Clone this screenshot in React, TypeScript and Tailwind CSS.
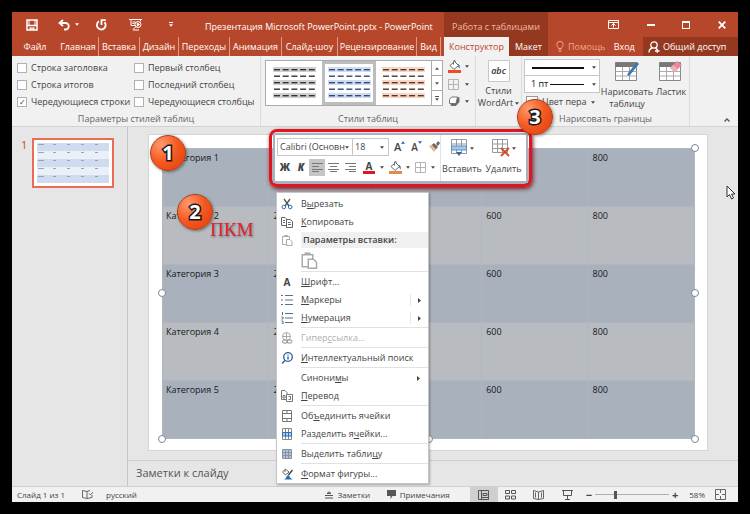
import React from 'react';
import clsx from 'clsx';

const tabs = [
  { label: 'Главная', width: 'w-[41px]' },
  { label: 'Вставка', width: 'w-[41px]' },
  { label: 'Дизайн', width: 'w-[39px]' },
  { label: 'Переходы', width: 'w-[51px]' },
  { label: 'Анимация', width: 'w-[52px]' },
  { label: 'Слайд-шоу', width: 'w-[56px]' },
  { label: 'Рецензирование', width: 'w-[79px]' },
  { label: 'Вид', width: 'w-[24px]' },
];

const rows = [1, 2, 3, 4, 5];

const Caret: React.FC<{ className?: string }> = ({ className }) => (
  <svg viewBox="0 0 4 3" className={clsx('h-[3px] w-1 shrink-0', className)} fill="currentColor" aria-hidden="true">
    <path d="M0 .3h4L2 2.7z" />
  </svg>
);

/* Title bar and tabs */

const QuickAccess = () => (
  <div className="flex w-[193px] shrink-0 items-center pl-[14px] text-white">
    <button aria-label="Сохранить" className="mr-[20px]">
      <svg viewBox="0 0 12 12" className="h-3 w-3" fill="none" stroke="currentColor" strokeWidth="1.5">
        <path d="M1 1h10v10H1zM1 6.5h10" />
        <path d="M3 1v5M9 1v5" strokeWidth="1" />
        <path d="M3.5 8.5h5V11h-2V9.5h-1V11h-2z" fill="currentColor" stroke="none" />
      </svg>
    </button>
    <button aria-label="Отменить" className="flex items-center gap-[5px]">
      <svg viewBox="0 0 12 12" className="h-3 w-3" fill="none" stroke="currentColor" strokeWidth="1.8">
        <path d="M5 1 1.5 4 5 7.2M2 4h5.5a3 3 0 0 1 0 6.5H6" />
      </svg>
      <Caret />
    </button>
    <button aria-label="Повторить" className="ml-[16px]">
      <svg viewBox="0 0 12 12" className="h-3 w-3" fill="none" stroke="currentColor" strokeWidth="1.8">
        <path d="M4 2.3a4.4 4.4 0 1 0 5.500.8M10.800 1.200H6.500V6" />
      </svg>
    </button>
    <button aria-label="Показ слайдов" className="ml-[22px]">
      <svg viewBox="0 0 14 13" className="h-[13px] w-[14px]" fill="none" stroke="currentColor" strokeWidth="1">
        <path d="M0 1.5h13M2 1.5v6h4M11.5 1.5v2M4 11.5l3-3M4 12h6" />
        <circle cx="9" cy="6.5" r="3" />
        <path d="M8.3 5v3l2.2-1.5z" fill="currentColor" />
        <path d="M3.5 4h3M3.5 5.5h2" />
      </svg>
    </button>
    <button aria-label="Настройка панели" className="ml-[26px] flex flex-col items-center gap-px">
      <span className="h-px w-1 bg-white" />
      <Caret />
    </button>
  </div>
);

const WindowControls = () => (
  <div className="ml-auto flex w-[130px] shrink-0 items-center justify-between pr-[12px] text-white">
    <button aria-label="Параметры ленты">
      <svg viewBox="0 0 11 9" className="h-[9px] w-[11px]" fill="none" stroke="currentColor">
        <path d="M.5.5h10v8H.5zM.5 2.5h10M5.5 7.5v-4M3.5 5.5l2-2 2 2" />
      </svg>
    </button>
    <button aria-label="Свернуть" className="h-[2px] w-2 bg-white" />
    <button aria-label="Развернуть" className="h-2 w-2 border border-t-2 border-white" />
    <button aria-label="Закрыть">
      <svg viewBox="0 0 8 8" className="h-2 w-2" stroke="currentColor" strokeWidth="1.8">
        <path d="m.7.7 6.6 6.6M7.3.7.7 7.3" />
      </svg>
    </button>
  </div>
);

const Header = () => (
  <header className="bg-[#b7472a] text-white">
    <div className="flex h-[25px]">
      <QuickAccess />
      <h1 className="flex w-[239px] shrink-0 items-center pt-1 text-[9px] whitespace-nowrap">
        Презентация Microsoft PowerPoint.pptx - PowerPoint
      </h1>
      <div className="flex w-[104px] shrink-0 items-center justify-center bg-[#953820] pt-1 text-[9px] text-[#f0b8a4]">
        Работа с таблицами
      </div>
      <WindowControls />
    </div>
    <nav className="flex h-[19px] items-stretch text-[9px] whitespace-nowrap">
      <button className="w-[46px] shrink-0">Файл</button>
      {tabs.map((tab) => (
        <button key={tab.label} className={clsx('shrink-0 border-r border-[#dc9c88]', tab.width)}>
          {tab.label}
        </button>
      ))}
      <button className="ml-[3px] w-[65px] shrink-0 bg-[#f1f1f1] text-[#c0452a]">Конструктор</button>
      <button className="w-[39px] shrink-0 bg-[#953820]">Макет</button>
      <button className="ml-[8px] flex items-center gap-1 text-[#efa68f]">
        <svg viewBox="0 0 8 11" className="h-[11px] w-2" fill="none" stroke="currentColor">
          <path d="M2.5 7.5C2.5 6 .8 5.500.8 3.600a3.200 3.200 0 0 1 6.400 0C7.200 5.500 5.500 6 5.500 7.500zM2.500 9h3M3 10.500h2" />
        </svg>
        Помощь
      </button>
      <button className="mx-auto">Вход</button>
      <button className="flex w-[95px] shrink-0 items-center gap-[3px] bg-[#953820] pl-[5px]">
        <svg viewBox="0 0 12 12" className="h-3 w-3" fill="none" stroke="currentColor" strokeWidth="1.300">
          <circle cx="6" cy="4" r="3.200" />
          <path d="M1 11.500c0-2.500 1.500-4 3.500-4.500M7.500 7l1.500 1.500M7 10h4.500M9.300 7.800v4" />
        </svg>
        Общий доступ
      </button>
    </nav>
  </header>
);

/* Ribbon */

const StyleOption: React.FC<{ label: string; checked?: boolean }> = ({ label, checked }) => (
  <label className="flex h-[17px] items-center gap-[4px] whitespace-nowrap">
    <input
      type="checkbox"
      defaultChecked={checked}
      className="grid h-[10px] w-[10px] shrink-0 appearance-none place-items-center border border-[#b0b0b0] bg-white text-[8px] leading-none checked:before:content-['✓']"
    />
    {label}
  </label>
);

const RibbonGroup: React.FC<{ title?: string; className?: string; children: React.ReactNode }> = ({
  title,
  className,
  children,
}) => (
  <section className={clsx('flex shrink-0 flex-col border-r border-[#dcdcdc]', className)}>
    <div className="flex h-[57px]">{children}</div>
    <div className="text-center text-[9px] leading-[14px] text-[#666]">{title}</div>
  </section>
);

const StyleThumb: React.FC<{ color: string; band: string; selected?: boolean }> = ({ color, band, selected }) => (
  <button
    aria-label="Стиль таблицы"
    className={clsx('flex items-center justify-center bg-white', selected && 'border-[3px] border-[#bdbdbd]')}
  >
    <svg viewBox="0 0 43 32" className="h-8 w-[43px]">
      {[0, 1, 2, 3, 4].map((r) => (
        <g key={r}>
          {r % 2 === 0 && <rect x="0" y={r * 6.5} width="43" height="5" fill={band} />}
          {[0, 1, 2, 3, 4].map((c) => (
            <rect key={c} x={c * 8.7 + 1} y={r * 6.5 + 2} width="6" height="1.4" fill={color} />
          ))}
        </g>
      ))}
    </svg>
  </button>
);

const BucketIcon: React.FC<{ bar: string }> = ({ bar }) => (
  <svg viewBox="0 0 13 13" className="h-[13px] w-[13px]" fill="none" stroke="#666">
    <path d="m2 5.500 4.500-4 4 4-4.500 4z" fill="#fff" />
    <path d="M5.500 4.500V1.500a1 1 0 0 1 2 0" />
    <path d="M10 4c1.500.5 2 2 1.700 4.500C10.500 8 10 6 10 4z" fill="#2b6cb0" stroke="none" />
    <path d="M0 10h13v3H0z" fill={bar} stroke="none" />
  </svg>
);

const GridIcon = () => (
  <svg viewBox="0 0 11 11" className="h-[11px] w-[11px]" fill="none" stroke="#b4b4b4">
    <path d="M.5.5h10v10H.5zM5.500.5v10M.5 5.500h10" />
  </svg>
);

const TableIcon: React.FC<{ className?: string; children?: React.ReactNode }> = ({ className, children }) => (
  <svg viewBox="0 0 24 22" className={clsx('h-[22px] w-6', className)} fill="none">
    <path d="M.5 2.500h21v18H.5z" fill="#fff" stroke="#888" />
    <path d="M.5 2.500h21V7H.5z" fill="#777" />
    <path d="M.5 11.500h21M.5 16h21M7.500 7v13M14.500 7v13" stroke="#aaa" />
    {children}
  </svg>
);

const Ribbon = () => (
  <div className="flex h-[71px] border-b border-[#d2d2d2] bg-[#f1f1f1] text-[9px] text-[#444]">
    <RibbonGroup title="Параметры стилей таблиц" className="w-[249px]">
      <div className="flex w-[117px] flex-col pt-[3px] pl-[5px]">
        <StyleOption label="Строка заголовка" />
        <StyleOption label="Строка итогов" />
        <StyleOption label="Чередующиеся строки" checked />
      </div>
      <div className="flex flex-col pt-[3px] pl-[5px]">
        <StyleOption label="Первый столбец" />
        <StyleOption label="Последний столбец" />
        <StyleOption label="Чередующиеся столбцы" />
      </div>
    </RibbonGroup>

    <RibbonGroup title="Стили таблиц" className="w-[215px]">
      <div className="mt-1 ml-1 grid h-[46px] w-[178px] grid-cols-[56px_54px_1fr_11px] border border-[#ababab] bg-white">
        <StyleThumb color="#333" band="#cfcfcf" />
        <StyleThumb color="#2f4a80" band="#cfdcf0" selected />
        <StyleThumb color="#5a3526" band="#f8d5c4" />
        <div className="flex flex-col divide-y divide-[#ababab] border-l border-[#ababab] text-[#555]">
          <button aria-label="Вверх" className="flex flex-1 items-center justify-center"><Caret className="rotate-180" /></button>
          <button aria-label="Вниз" className="flex flex-1 items-center justify-center"><Caret /></button>
          <button aria-label="Ещё" className="flex flex-1 flex-col items-center justify-center gap-px">
            <span className="h-px w-1 bg-[#555]" />
            <Caret />
          </button>
        </div>
      </div>
      <div className="ml-[5px] flex flex-col justify-between pt-1 pb-[5px]">
        <button aria-label="Заливка" className="flex items-center gap-1"><BucketIcon bar="#ed4b25" /><Caret /></button>
        <button aria-label="Границы" className="flex items-center gap-[6px]"><GridIcon /><Caret /></button>
        <button aria-label="Эффекты" className="flex items-center gap-[5px]">
          <svg viewBox="0 0 12 11" className="h-[11px] w-3" stroke="#777">
            <path d="M3.500 4 6 1.500h5V6L8 9.500H3z" fill="#666" />
            <path d="M1.500 3.500 3.500 1h6L8 7.500H1.500z" fill="#fff" />
          </svg>
          <Caret />
        </button>
      </div>
    </RibbonGroup>

    <RibbonGroup className="w-[46px]">
      <button className="flex w-full flex-col items-center pt-1 leading-[12px]">
        <span className="mb-[3px] flex h-[22px] w-[22px] items-center justify-center border border-[#c8c8c8] bg-white text-[9px] font-semibold text-[#333] italic">
          abc
        </span>
        <span>Стили</span>
        <span className="flex items-center gap-[2px]">WordArt<Caret /></span>
      </button>
    </RibbonGroup>

    <RibbonGroup title="Нарисовать границы" className="w-[168px]">
      <div className="flex w-[78px] shrink-0 flex-col pt-[3px] pl-[2px]">
        <div className="flex h-[17px] items-center border border-[#c6c6c6] bg-white pr-[3px] pl-[6px]">
          <select aria-label="Стиль пера" className="w-px appearance-none"><option> </option></select>
          <span className="h-[2px] w-[52px] bg-[#111]" />
          <Caret className="ml-auto" />
        </div>
        <div className="flex h-[17px] items-center border border-t-0 border-[#c6c6c6] bg-white pr-[3px] pl-[6px]">
          <select aria-label="Толщина пера" className="w-[19px] appearance-none text-[#111]"><option>1 пт</option></select>
          <span className="h-px w-[34px] bg-[#111]" />
          <Caret className="ml-auto" />
        </div>
        <button className="flex h-[18px] items-center gap-1 pl-[2px] whitespace-nowrap">
          <span className="h-3 w-3 shrink-0 border border-[#999] bg-white" />
          Цвет пера
          <Caret />
        </button>
      </div>
      <button className="flex w-[54px] shrink-0 flex-col items-center pt-[4px] leading-[12px]">
        <TableIcon className="mb-[4px]">
          <path d="m11 18 2-5 9-11 2 2-9 11z" fill="#3f76b5" />
          <path d="m11 18 1-3 2 2z" fill="#fff" />
        </TableIcon>
        Нарисовать таблицу
      </button>
      <button className="flex w-[34px] shrink-0 flex-col items-center pt-[4px] leading-[12px]">
        <TableIcon className="mb-[4px]">
          <path d="m11 8 7-7 5 4-7 7z" fill="#e58a98" />
          <path d="m11 8 3-3 5 4-3 3z" fill="#f0b0b8" />
        </TableIcon>
        Ластик
      </button>
    </RibbonGroup>
    <button aria-label="Свернуть ленту" className="mt-auto mr-[8px] mb-[4px] ml-auto">
      <svg viewBox="0 0 6 4" className="h-1 w-[6px]" fill="none" stroke="#555" strokeWidth="1.300"><path d="m.5 3.500L3 1l2.500 2.500" /></svg>
    </button>
  </div>
);

/* Workspace */

const Thumbnails = () => (
  <aside className="flex w-[116px] shrink-0 items-start gap-[5px] border-r border-[#c6c6c6] pt-[11px] pl-[9px]">
    <span className="text-[11px] leading-[14px] text-[#d0472b]">1</span>
    <div className="w-[82px] border-2 border-[#ed6a54] bg-white px-[3px] py-[3px]">
      <svg viewBox="0 0 72 40" className="h-10 w-[72px]">
        {rows.map((row, i) => (
          <g key={row}>
            <rect y={i * 8} width="72" height="8" fill={i % 2 ? '#eaeff8' : '#cfdbef'} />
            {[1, 16, 30, 44, 58].map((x) => (
              <rect key={x} x={x} y={i * 8 + 1} width={x === 1 ? 6 : 3} height="1" fill="#9aa3b4" />
            ))}
          </g>
        ))}
      </svg>
    </div>
  </aside>
);

const handles = [
  '-top-1 -left-1',
  '-top-1 -right-1',
  'top-[141px] -left-1',
  'top-[141px] -right-1',
  '-bottom-1 -left-1',
  '-bottom-1 left-1/2 -translate-x-1/2',
  '-bottom-1 -right-1',
];

const Slide = () => (
  <div className="mt-[7px] mr-[30px] ml-5 border border-[#d4d4d4] bg-white pt-[13px] pr-[12px] pb-[11px] pl-[13px]">
    <div className="relative">
      <table className="w-full table-fixed border-collapse text-[9px] leading-[12px] font-medium text-[#141a22]">
        <tbody>
          {rows.map((row) => (
            <tr key={row} className={row % 2 ? 'bg-[#a9b1bc]' : 'bg-[#b8bbc0]'}>
              <th scope="row" className="h-[58px] border border-[#b1b6be] px-[3px] pt-[3px] text-left align-top font-medium">
                Категория {row}
              </th>
              {[200, 400, 600, 800].map((value) => (
                <td key={value} className="border border-[#b1b6be] px-[4px] pt-[3px] align-top">{value}</td>
              ))}
            </tr>
          ))}
        </tbody>
      </table>
      {handles.map((place) => (
        <span key={place} className={clsx('absolute h-2 w-2 rounded-full border border-[#7f8894] bg-white', place)} />
      ))}
    </div>
  </div>
);

/* Mini toolbar */

const Lines: React.FC<{ d: string }> = ({ d }) => (
  <svg viewBox="0 0 11 9" className="h-[9px] w-[11px]" stroke="#777"><path d={d} /></svg>
);

const MiniToolbar = () => (
  <div className="absolute top-[117px] left-[257px] rounded-lg border-[3px] border-[#e01522] shadow-[1px_2px_4px_#7a2020]">
    <div className="m-px flex h-[50px] w-[255px] border-2 border-[#a9b1bc] bg-white px-[2px] text-[9px] text-[#444]">
      <div className="flex w-[163px] shrink-0 flex-col gap-[3px] pt-[3px]">
        <div className="flex h-[18px] items-center">
          <div className="flex h-full w-[76px] items-center border border-[#c6c6c6] pr-[3px] pl-[2px]">
            <select aria-label="Шрифт" className="w-[67px] appearance-none overflow-hidden"><option>Calibri (Основн</option></select>
            <Caret />
          </div>
          <div className="flex h-full w-[36px] items-center justify-between border border-l-0 border-[#c6c6c6] pr-[4px] pl-[2px]">
            <select aria-label="Размер шрифта" className="w-5 appearance-none"><option>18</option></select>
            <Caret />
          </div>
          <button aria-label="Увеличить шрифт" className="ml-[5px] flex text-[11px] leading-[12px] font-semibold">
            A<Caret className="rotate-180 text-[#2b5c9c]" />
          </button>
          <button aria-label="Уменьшить шрифт" className="ml-[6px] flex text-[10px] leading-[12px] font-semibold">
            A<Caret className="text-[#2b5c9c]" />
          </button>
          <button aria-label="Формат по образцу" className="ml-[6px]">
            <svg viewBox="0 0 12 12" className="h-3 w-3">
              <path d="M1 5 5 3l4 4-3 4z" fill="#e8b48c" />
              <path d="m4 4 2-2 4 4-2 2zM8 3l2-3 2 2-2 3z" fill="#666" />
            </svg>
          </button>
        </div>
        <div className="flex h-[17px] items-center">
          <button className="w-[16px] text-[10px] font-extrabold">Ж</button>
          <button className="w-[16px] text-[10px] font-extrabold italic">К</button>
          <button aria-label="По левому краю" className="flex h-[17px] w-[16px] items-center justify-center bg-[#c5c5c5]"><Lines d="M0 .5h11M0 3.500h7M0 6.500h11M0 8.500h7" /></button>
          <button aria-label="По центру" className="flex w-[17px] justify-center"><Lines d="M0 .5h11M2 3.500h7M0 6.500h11M2 8.500h7" /></button>
          <button aria-label="По правому краю" className="flex w-[17px] justify-center"><Lines d="M0 .5h11M4 3.500h7M0 6.500h11M4 8.500h7" /></button>
          <button aria-label="Цвет текста" className="ml-[4px] flex items-center gap-[5px]">
            <span className="flex w-[12px] flex-col items-center border-b-[3px] border-[#e01522] text-[10px] leading-[9px] font-bold">A</span>
            <Caret />
          </button>
          <button aria-label="Заливка" className="ml-[5px] flex items-center gap-[4px]"><BucketIcon bar="#e58a4e" /><Caret /></button>
          <button aria-label="Границы" className="ml-[5px] flex items-center gap-[5px]"><GridIcon /><Caret /></button>
        </div>
      </div>
      <button className="flex w-[43px] shrink-0 flex-col items-center justify-between border-l border-[#e2e2e2] pt-[4px] pb-[6px] leading-[12px]">
        <span className="flex items-center gap-[2px]">
          <svg viewBox="0 0 17 18" className="h-[18px] w-[17px]" fill="none">
            <path d="M.5.5h15v14H.5zM5.500.5v14M10.500.5v14M.5 5h15" stroke="#999" />
            <path d="M.5 7h15v4H.5z" fill="#a7c7ea" stroke="#5b8fc7" />
            <path d="M5 13h6l-3 4z" fill="#2b6cb0" />
          </svg>
          <Caret />
        </span>
        Вставить
      </button>
      <button className="flex w-[41px] shrink-0 flex-col items-center justify-between pt-[4px] pb-[6px] leading-[12px]">
        <span className="flex items-center gap-[2px]">
          <svg viewBox="0 0 18 18" className="h-[18px] w-[18px]" fill="none">
            <path d="M.5.5h15v13H.5zM5.500.5v13M10.500.5v13M.5 5h15M.5 9.500h15" stroke="#999" />
            <path d="m9 9 8 8M17 9l-8 8" stroke="#d14b2a" strokeWidth="1.800" />
          </svg>
          <Caret />
        </span>
        Удалить
      </button>
    </div>
  </div>
);

/* Context menu */

const menuIcons: Record<string, React.ReactNode> = {
  cut: (
    <>
      <path d="m3 1 5 7M9 1 4 8" stroke="#555" strokeWidth="1.300" />
      <circle cx="2.800" cy="9" r="1.800" stroke="#2b6cb0" /><circle cx="9.200" cy="9" r="1.800" stroke="#2b6cb0" />
    </>
  ),
  copy: <path d="M5.500 9.500h-5v-8H4L5.500 3zM5.500 3.500H9l2.500 2v6h-6zM2 4.500h2M2 6.500h2M7 6.500h2.500M7 8.500h3" stroke="#666" />,
  paste: <path d="M5 10.500H1.500v-8h7V5M3.500 2.500v-1h3v1M5.500 5.500H9l2 2v4H5.500z" stroke="#aaa" />,
  bullets: <path d="M0 1.500h2M0 6h2M0 10.500h2M4 1.500h8M4 6h8M4 10.500h8" stroke="#56708f" />,
  numbers: <path d="M1.500 0v3M.5 5h1.500v2H.5M.5 9h1.500v3H.5M4 1.500h8M4 6h8M4 10.500h8" stroke="#56708f" />,
  link: (
    <>
      <circle cx="5.500" cy="4.500" r="4" stroke="#aaa" /><path d="M1.500 4.500h8M5.500.5v7" stroke="#aaa" />
      <rect x="1.500" y="8" width="5" height="3" rx="1.500" fill="#fff" stroke="#888" /><rect x="6" y="8" width="5" height="3" rx="1.500" stroke="#888" />
    </>
  ),
  search: (
    <>
      <circle cx="7" cy="5" r="4.300" stroke="#2b5c9c" strokeWidth="1.300" />
      <path d="M4 8.500 1 11.500M7 4.500v3M7 2.500v1" stroke="#2b5c9c" strokeWidth="1.400" />
    </>
  ),
  translate: <path d="M5 9.500H.5v-9H4l2 2v2M5.500 4.500h6v7h-6zM2 5.500h2v2.500H2zM7.500 6.500h2v3h-2" stroke="#777" />,
  merge: <path d="M1.500.5h9v11h-9zM1.500 3.500h9M1.500 8.500h9M6 .5v3M6 8.500v3" stroke="#777" />,
  split: (
    <>
      <path d="M1.500.5h9v11h-9zM4.500.5v11M7.500.5v11" stroke="#888" />
      <path d="M1.500 4.500h9v3.500h-9zM4.500 4.500v4M7.500 4.500v4" fill="#b5d1ef" stroke="#2b6cb0" />
    </>
  ),
  table: <path d="M1.500 1.500h9v9h-9zM4.500 1.500v9M7.500 1.500v9M1.500 4.500h9M1.500 7.500h9" fill="#b4c3d4" stroke="#8593a3" />,
  shape: (
    <>
      <path d="m1.500 4 3-3L8 4 4.500 7zM4 1.500V4" stroke="#666" />
      <path d="M11.500 2 7.500 7" stroke="#444" strokeWidth="1.500" />
      <path d="M3 11.500c2 0 2-4 4.500-4.500l1 1.500c.5 1 1.500 2 3 3z" fill="#2b6cb0" />
    </>
  ),
};

const MenuIcon: React.FC<{ name: string }> = ({ name }) => (
  <svg viewBox="0 0 12 12" className="h-3 w-3" fill="none">{menuIcons[name]}</svg>
);

interface MenuItem {
  pre?: string;
  hot: string;
  post: string;
  icon?: string;
  letter?: string;
  arrow?: 'split' | 'plain';
  disabled?: boolean;
}

const menuGroups: MenuItem[][] = [
  [
    { hot: 'Ш', post: 'рифт...', letter: 'A' },
    { hot: 'М', post: 'аркеры', icon: 'bullets', arrow: 'split' },
    { hot: 'Н', post: 'умерация', icon: 'numbers', arrow: 'split' },
  ],
  [{ pre: 'Гипер', hot: 'с', post: 'сылка...', icon: 'link', disabled: true }],
  [{ hot: 'И', post: 'нтеллектуальный поиск', icon: 'search' }],
  [
    { pre: 'Синони', hot: 'м', post: 'ы', arrow: 'plain' },
    { hot: 'П', post: 'еревод', icon: 'translate' },
  ],
  [
    { pre: 'Об', hot: 'ъ', post: 'единить ячейки', icon: 'merge' },
    { pre: 'Разделить я', hot: 'ч', post: 'ейки...', icon: 'split' },
  ],
  [{ pre: 'Выделить табли', hot: 'ц', post: 'у', icon: 'table' }],
  [{ hot: 'Ф', post: 'ормат фигуры...', icon: 'shape' }],
];

const MenuRow: React.FC<{ item: MenuItem }> = ({ item }) => (
  <button
    role="menuitem"
    disabled={item.disabled}
    className={clsx('flex h-[18px] w-full items-center text-left', item.disabled && 'text-[#b0b0b0]')}
  >
    <span className="flex w-[24px] shrink-0 items-center pl-[4px]">
      {item.icon && <MenuIcon name={item.icon} />}
      {item.letter && <b className="w-3 text-center text-[10px]">{item.letter}</b>}
    </span>
    <span className="whitespace-nowrap">
      {item.pre}<u>{item.hot}</u>{item.post}
    </span>
    {item.arrow && (
      <span className={clsx('ml-auto flex h-3 w-[18px] items-center pl-[7px]', item.arrow === 'split' && 'border-l border-[#e8e8e8]')}>
        <svg viewBox="0 0 3 5" className="h-[5px] w-[3px]" fill="#444"><path d="m0 0 3 2.500L0 5z" /></svg>
      </span>
    )}
  </button>
);

const ContextMenu = () => (
  <div role="menu" className="absolute top-[180px] left-[264px] w-[153px] border border-[#c6c6c6] bg-white pt-[2px] text-[9px] text-[#444] shadow-[1px_1px_2px_rgba(0,0,0,0.3)]">
    <MenuRow item={{ pre: 'В', hot: 'ы', post: 'резать', icon: 'cut' }} />
    <MenuRow item={{ hot: 'К', post: 'опировать', icon: 'copy' }} />
    <div className="flex h-[18px] items-center pl-[4px]">
      <MenuIcon name="paste" />
      <span className="ml-2 flex h-[16px] flex-1 items-center bg-[#f0f0f0] pl-[2px] font-semibold">Параметры вставки:</span>
    </div>
    <button aria-label="Вставить" className="flex h-[22px] items-center pl-[23px]">
      <svg viewBox="0 0 12 12" className="h-[18px] w-[18px]" fill="none">{menuIcons.paste}</svg>
    </button>
    {menuGroups.map((group, i) => (
      <div key={i}>
        <hr className="mb-px ml-[24px] border-t border-[#e1e1e1]" />
        {group.map((item) => (
          <MenuRow key={item.hot + item.post} item={item} />
        ))}
      </div>
    ))}
  </div>
);

/* Numbered callouts */

const Badge: React.FC<{ n: number; className: string }> = ({ n, className }) => (
  <span
    className={clsx(
      'absolute flex h-9 w-9 items-center justify-center rounded-full border border-[#a8401c] bg-radial-[at_30%_25%] from-[#ff9a6c] via-[#f4571f] to-[#e03e08] text-[20px] font-bold text-white shadow-[1px_1px_3px_rgba(0,0,0,0.4)] [-webkit-text-stroke:3px_#1a1a1a] [paint-order:stroke_fill]',
      className,
    )}
  >
    {n}
  </span>
);

const StatusBar = () => (
  <footer className="flex h-4 items-center border-t border-[#d0d0d0] bg-[#f1f1f1] pl-[5px] text-[8px] whitespace-nowrap text-[#444]">
    <span className="w-[65px]">Слайд 1 из 1</span>
    <svg viewBox="0 0 11 9" className="mr-[13px] h-[9px] w-[11px]" fill="none" stroke="#666">
      <path d="M5 8.500V1.500L.5.5v7zM5 1.500 8 .5M5 8.500l5-1V5M7 3.500 8.500 5 11 2" />
    </svg>
    <button>русский</button>
    <div className="ml-auto flex items-center pr-[12px]">
      <button className="flex w-[62px] items-center gap-[5px]">
        <svg viewBox="0 0 8 8" className="h-2 w-2" fill="none" stroke="#555"><path d="M0 4.500h8M0 7h8M2 2.500 4 .8l2 1.700z" /></svg>
        Заметки
      </button>
      <button className="flex w-[83px] items-center gap-[4px]">
        <svg viewBox="0 0 9 9" className="h-[9px] w-[9px]" fill="#555"><path d="M0 0h9v6H5.500L3.500 9V6H0z" /></svg>
        Примечания
      </button>
      <button aria-label="Обычный" className="flex h-[15px] w-[28px] items-center justify-center bg-[#cfcfcf]">
        <svg viewBox="0 0 11 10" className="h-[10px] w-[11px]" fill="none" stroke="#555"><path d="M.5.5h10v9H.5zM3.500.5v9M5 3.500h4v2H5zM3.500 7.500h7" /></svg>
      </button>
      <button aria-label="Сортировщик" className="ml-[7px]">
        <svg viewBox="0 0 11 10" className="h-[10px] w-[11px]" fill="none" stroke="#555"><path d="M.5.5h4v3h-4zM6.500.5h4v3h-4zM.5 6h4v3h-4zM6.500 6h4v3h-4z" /></svg>
      </button>
      <button aria-label="Чтение" className="ml-[17px]">
        <svg viewBox="0 0 11 10" className="h-[10px] w-[11px]" fill="none" stroke="#666"><path d="M5.500 2v8M.5.500l5 1.500 5-1.500v8l-5 1-5-1zM2.500 2.500v5M8.500 2.500v5" /></svg>
      </button>
      <button aria-label="Показ слайдов" className="ml-[18px]">
        <svg viewBox="0 0 11 10" className="h-[10px] w-[11px]" fill="none" stroke="#555"><path d="M0 .5h11M1.500.5v5h8v-5M5.500 5.500v4M3 9.500h5" /></svg>
      </button>
      <button className="ml-[13px] text-[11px] leading-none font-bold">−</button>
      <input
        type="range"
        aria-label="Масштаб"
        defaultValue={27}
        className="mx-[3px] h-2 w-[74px] appearance-none bg-[linear-gradient(#b0b0b0,#b0b0b0)] bg-[length:100%_1px] bg-center bg-no-repeat [&::-webkit-slider-thumb]:h-2 [&::-webkit-slider-thumb]:w-[3px] [&::-webkit-slider-thumb]:appearance-none [&::-webkit-slider-thumb]:bg-[#555]"
      />
      <button className="text-[11px] leading-none font-bold">+</button>
      <span className="ml-[11px]">58%</span>
      <button aria-label="По размеру окна" className="ml-[10px]">
        <svg viewBox="0 0 11 11" className="h-[11px] w-[11px]" fill="none" stroke="#666"><path d="M.5.5h10v10H.5zM5.500 0v4M5.500 7v4M0 5.500h4M7 5.500h4" /></svg>
      </button>
    </div>
  </footer>
);

export default function App() {
  return (
    <div className="flex min-h-screen bg-black p-3 font-['Open_Sans','Noto_Sans',sans-serif]">
      <div className="relative flex min-w-0 flex-1 flex-col bg-[#e6e6e6]">
        <Header />
        <Ribbon />
        <main className="flex flex-1">
          <Thumbnails />
          <div className="flex min-w-0 flex-1 flex-col">
            <Slide />
            <div className="mt-[9px] flex-1 border-t border-[#cfcfcf] pt-[4px] pl-2 text-[11px] text-[#555]">
              Заметки к слайду
            </div>
          </div>
        </main>
        <StatusBar />

        <MiniToolbar />
        <ContextMenu />
        <Badge n={1} className="top-[123px] left-[138px]" />
        <Badge n={2} className="top-[182px] left-[165px]" />
        <Badge n={3} className="top-[87px] left-[505px]" />
        <span className="absolute top-[207px] left-[198px] font-['Liberation_Serif',serif] text-[19px] leading-[22px] text-[#e0202a] drop-shadow-[1px_1px_1px_rgba(0,0,0,0.4)]">
          ПКМ
        </span>
        <svg viewBox="0 0 10 15" className="absolute top-[173px] right-[2px] h-[15px] w-[10px]" fill="#fff" stroke="#333">
          <path d="M1 1v11l2.500-2.500L5.500 14l2-1-2-4H9z" />
        </svg>
      </div>
    </div>
  );
}
